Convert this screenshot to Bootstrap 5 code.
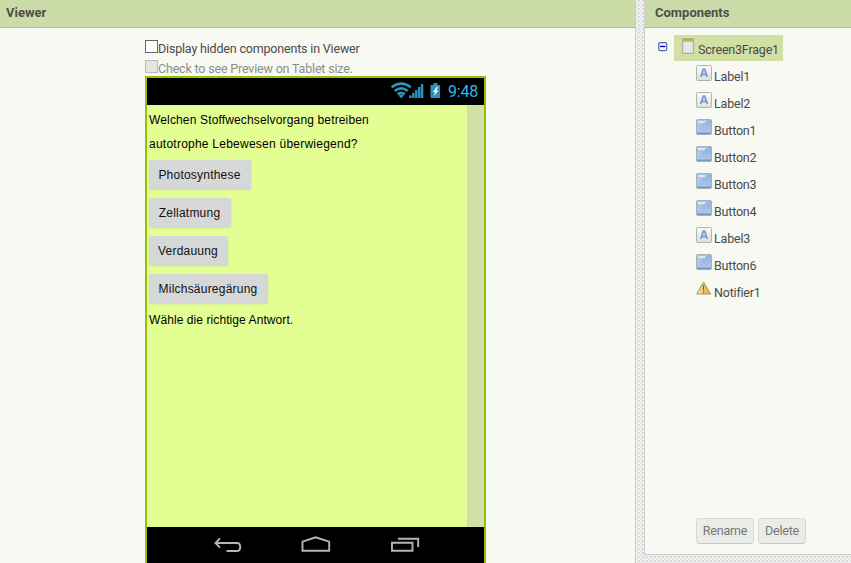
<!DOCTYPE html>
<html lang="de">
<head>
<meta charset="utf-8">
<title>Viewer</title>
<link href="https://cdn.jsdelivr.net/npm/bootstrap@5.3.0/dist/css/bootstrap.min.css" rel="stylesheet">
<style>
body{width:851px;height:563px;font-family:Roboto,sans-serif;font-size:13px;line-height:20px;color:#4a4a4a;
 background-color:#ececec;background-image:conic-gradient(#dadada 25%,#f1f1f1 0 50%,#e6e6e6 0 75%,#f1f1f1 0);background-size:4px 4px}
svg{display:block;flex:none}
.viewer-pane{width:636px;background:#f8f9f3;border-right:1px solid #ccc}
.gutter{width:8px}
.side-pane{width:207px;height:555px;background:#f8f9f3;border:solid #ccc;border-width:0 0 1px 1px}
.pane-title{height:28px;background:#ccdca8;border-bottom:1px solid #acb49c;font-weight:700;line-height:25px;color:#4c4f48;flex:none}
.viewer-pane .pane-title{padding-left:6px}
.side-pane .pane-title{padding-left:10px}
.stage{margin-left:145px;width:341px;padding-top:11px}
.opt{height:20px;line-height:20px;font-size:12.5px;letter-spacing:-.18px;white-space:nowrap}
.box{width:13px;height:13px;border:1px solid #666;background:#fff;margin-top:1px}
.opt.off{color:#8c8c8c}
.opt.off .box{border-color:#bbb;background:#e5e5e5}
.phone{border:2px solid #94bf0a;border-bottom:0;height:487px;margin-top:-3px}
.status{height:27px;background:#000;color:#33b5e5;font-size:16px;letter-spacing:-.2px;line-height:27px;padding-right:6px}
.screen{height:422px;background:#e3ff93}
.app{width:320px;padding:3px 2px;font-family:"Liberation Sans",Arial,sans-serif;font-size:12px;color:#000}
.app p{line-height:24px;height:24px;margin:0;white-space:nowrap;letter-spacing:.08px}
.app .q1{letter-spacing:.15px}
.app .q2{letter-spacing:.24px;margin-bottom:4px}
.app .btn{height:29px;padding:1px 1px 0 0;margin-bottom:9px;border:0;border-radius:2px;background:#d6d7d7;color:#111;font-size:12px;line-height:28px;letter-spacing:.22px;box-shadow:0 1px 2px #cddb9e;text-align:center;white-space:nowrap}
.w-a{width:102px}.w-b{width:82px}.w-c{width:79px}
.app .w-d{width:119px;margin-bottom:5px}
.scroll{width:17px;background:#d2e0a6}
.navkeys{height:36px;background:#000}
.tree{padding:7px 0 0 13px}
.root{height:26px;background:#d2e0a6;width:109px;padding:3px 0 0 7px;line-height:23px}
.kids{padding-left:38px}
.node{height:27px;line-height:31px;gap:2px}
.node span,.root span{white-space:nowrap;font-size:12.5px;letter-spacing:-.2px}
.acts{gap:4px;padding:0 0 10px 51px}
.acts .btn{height:26px;padding:0;border:1px solid #d8d8d5;border-bottom-color:#c6c6c3;border-radius:4px;background:#ebebea;color:#777;font-size:12.5px;letter-spacing:-.2px;line-height:24px}
.w-r{width:58px}.w-x{width:48px}
</style>
</head>
<body class="d-flex overflow-hidden">
<svg width="0" height="0" class="position-absolute">
<defs>
<linearGradient id="gl" x2="0" y2="1"><stop stop-color="#fafafa"/><stop offset="1" stop-color="#dedede"/></linearGradient>
<linearGradient id="gb" x2="0" y2="1"><stop stop-color="#8db0dd"/><stop offset="1" stop-color="#b2cbea"/></linearGradient>
<linearGradient id="gw"><stop stop-color="#fce5a8"/><stop offset="1" stop-color="#f0a030"/></linearGradient>
<symbol id="lab" viewBox="0 0 16 16"><rect x=".5" y=".5" width="15" height="15" rx="1" fill="url(#gl)" stroke="#b2b2b2"/><path d="M4.7 12 7.4 4.3h1.2L11.3 12M5.7 9.5h4.6" fill="none" stroke="#7c9fd3" stroke-width="1.9"/></symbol>
<symbol id="bt" viewBox="0 0 16 16"><rect x=".5" y=".5" width="15" height="15" rx="1" fill="url(#gb)" stroke="#aab0b8"/><path d="M1 1h12Q7 4 4 9L1 12z" fill="#b3cbe9" opacity=".7"/><path d="M2 2h7v2H2z" fill="#dfe9f5"/><path d="M1 13.5h14V15H1z" fill="#7094cc"/></symbol>
</defs>
</svg>
<main class="viewer-pane d-flex flex-column flex-shrink-0">
 <div class="pane-title">Viewer</div>
 <div class="stage">
  <label class="opt d-flex"><i class="box"></i><span>Display hidden components in Viewer</span></label>
  <label class="opt off d-flex"><i class="box"></i><span>Check to see Preview on Tablet size.</span></label>
  <div class="phone">
   <div class="status d-flex justify-content-end">
    <svg width="51" height="27" viewBox="0 0 51 27" class="me-1">
     <g fill="none" stroke="#2d93bb" stroke-width="2.6"><path d="M2.6 9.3Q12.2 1.9 21.8 9.3M5.7 12.9q6.5-5.2 13 0M8.6 16.2q3.6-2.8 7.2 0"/></g><path d="m12.2 20.2-2.7-2.8q2.7-1.8 5.4 0z" fill="#2d93bb"/>
     <path d="M20.3 17.5h2.4V20h-2.4zM23.2 14.7h2.4V20h-2.4zM26.1 12h2.4v8h-2.4zM29 9h2.4v11H29zM31.9 6h2.4v14h-2.4z" fill="#2d93bb"/>
     <path d="M44.5 5h4v2h3v13h-10V7h3z" fill="#2d93bb"/><path d="M48 8.5 44 14h2l-1 4 4.5-5.5h-2.3L49 9z" fill="#fff"/>
    </svg><span class="ms-1">9:48</span>
   </div>
   <div class="screen d-flex">
    <div class="app d-flex flex-column align-items-start">
     <p class="q1">Welchen Stoffwechselvorgang betreiben</p>
     <p class="q2">autotrophe Lebewesen überwiegend?</p>
     <button class="btn w-a">Photosynthese</button>
     <button class="btn w-b">Zellatmung</button>
     <button class="btn w-c">Verdauung</button>
     <button class="btn w-d">Milchsäuregärung</button>
     <p>Wähle die richtige Antwort.</p>
    </div>
    <div class="scroll"></div>
   </div>
   <div class="navkeys">
    <svg width="337" height="36" viewBox="0 0 337 36" fill="none" stroke="#b5b5b5" stroke-width="1.9"><path d="M73 11.3 68.5 16l4.5 4.7M68.5 16H90q3.2 0 3.2 4T90 24H79.5M155.5 23.8v-9.2l13.2-4.3 13.5 4.3v9.2zM245 15.8h20.5v8H245zM251 11.8h20.2V20"/></svg>
   </div>
  </div>
 </div>
</main>
<div class="gutter flex-shrink-0"></div>
<aside class="side-pane d-flex flex-column flex-shrink-0">
 <div class="pane-title">Components</div>
 <div class="tree flex-grow-1">
  <div class="d-flex">
   <svg width="16" height="26" viewBox="0 0 16 26"><rect x=".7" y="7.7" width="8" height="8" rx="1.5" fill="#f4f6fb" stroke="#5268ad" stroke-width="1.2"/><path d="M2 11.5h5.4" stroke="#0000b0" stroke-width="1.3"/></svg>
   <div class="root d-flex"><svg width="17" height="17" viewBox="0 0 17 17"><rect x="1.6" y=".6" width="10.8" height="14.8" rx="1" fill="#e6e6e6" stroke="#adadad" stroke-width="1.2"/><path d="M2 1h10v2.7H2z" fill="#a6c437"/></svg><span>Screen3Frage1</span></div>
  </div>
  <div class="kids">
   <div class="node d-flex"><svg class="mt-1" width="16" height="16"><use href="#lab"/></svg><span>Label1</span></div>
   <div class="node d-flex"><svg class="mt-1" width="16" height="16"><use href="#lab"/></svg><span>Label2</span></div>
   <div class="node d-flex"><svg class="mt-1" width="16" height="16"><use href="#bt"/></svg><span>Button1</span></div>
   <div class="node d-flex"><svg class="mt-1" width="16" height="16"><use href="#bt"/></svg><span>Button2</span></div>
   <div class="node d-flex"><svg class="mt-1" width="16" height="16"><use href="#bt"/></svg><span>Button3</span></div>
   <div class="node d-flex"><svg class="mt-1" width="16" height="16"><use href="#bt"/></svg><span>Button4</span></div>
   <div class="node d-flex"><svg class="mt-1" width="16" height="16"><use href="#lab"/></svg><span>Label3</span></div>
   <div class="node d-flex"><svg class="mt-1" width="16" height="16"><use href="#bt"/></svg><span>Button6</span></div>
   <div class="node d-flex"><svg class="mt-1" width="16" height="16" viewBox="0 0 16 16"><path d="M7.5 1 14.7 13H.6z" fill="url(#gw)" stroke="#a39478" stroke-linejoin="round"/><path d="M7.5 4v5.5M7.5 10.5v1.5" stroke="#8a6a30" stroke-width="1.2"/></svg><span>Notifier1</span></div>
  </div>
 </div>
 <div class="acts d-flex"><button class="btn w-r">Rename</button><button class="btn w-x">Delete</button></div>
</aside>
<script src="https://cdn.jsdelivr.net/npm/bootstrap@5.3.0/dist/js/bootstrap.bundle.min.js"></script>
</body>
</html>
